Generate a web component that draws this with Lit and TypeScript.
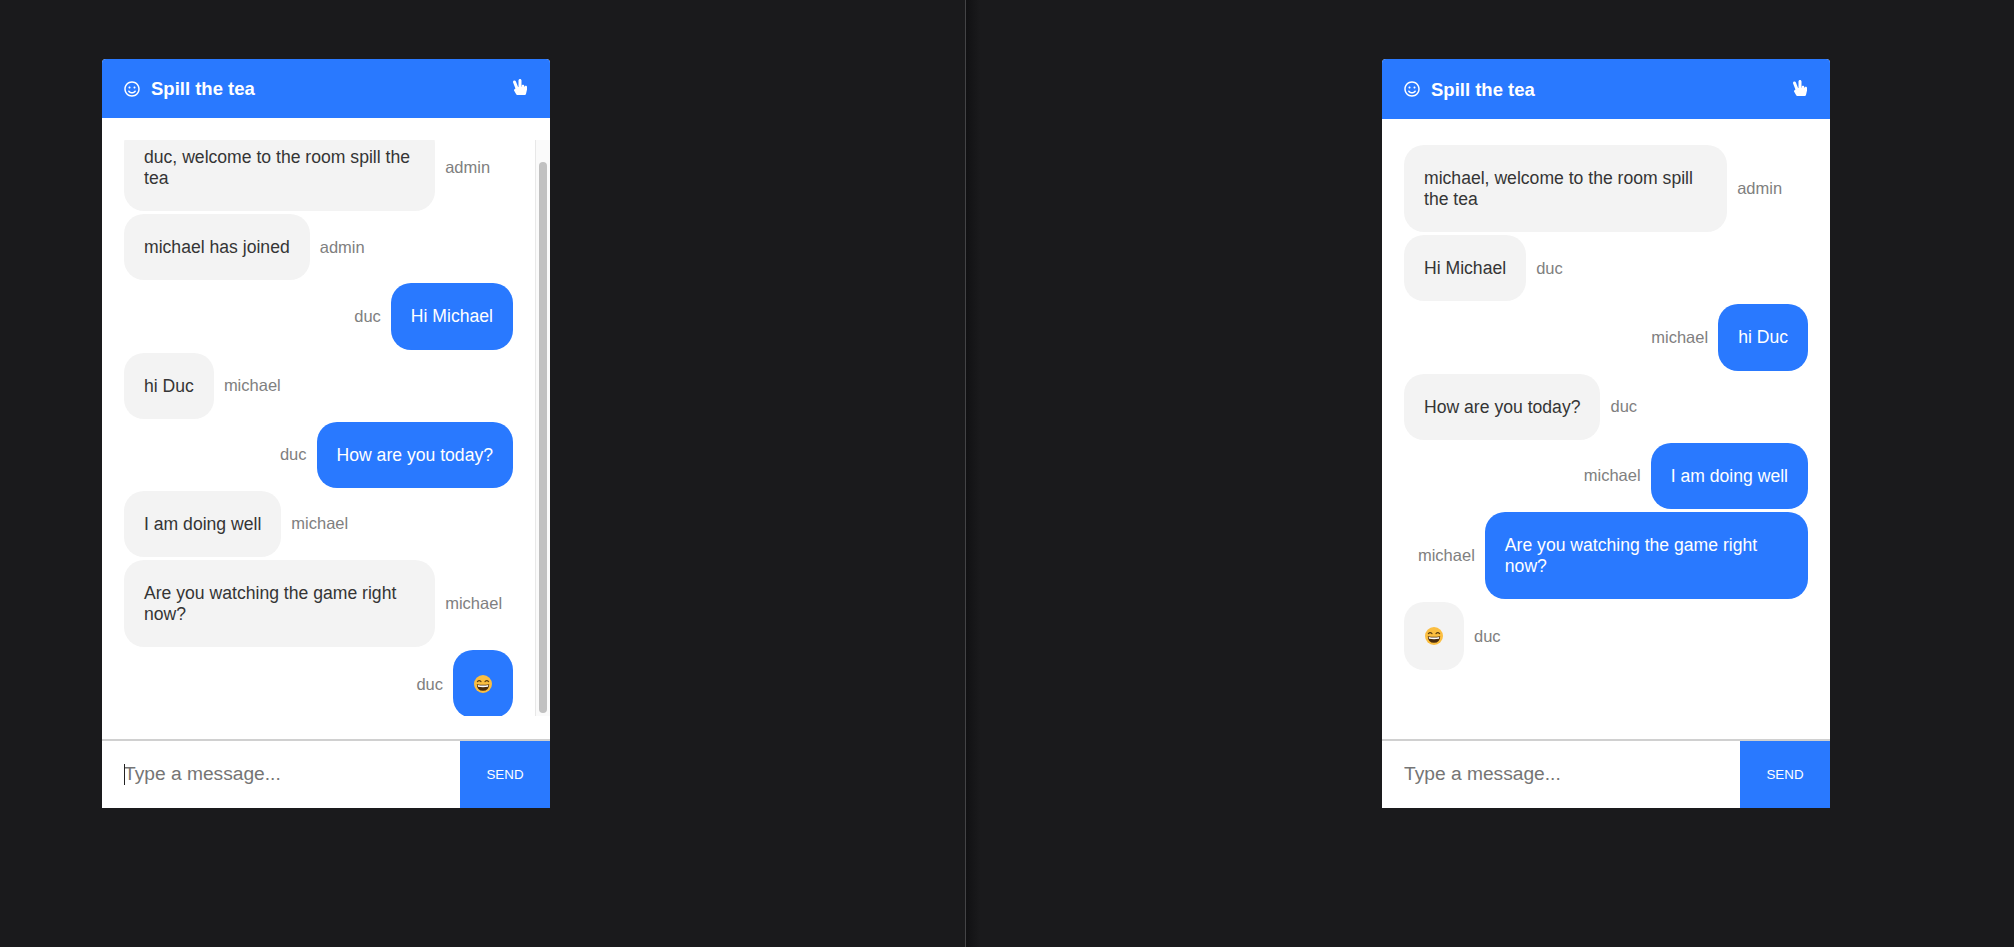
import { LitElement, html, css, svg, nothing, type TemplateResult } from "lit";
import { customElement, property, query } from "lit/decorators.js";

/** One line in the room. `mine` puts the bubble on the right in blue. */
interface Message {
  sender: string;
  text: string;
  mine?: boolean;
  emoji?: boolean;
}

const LEFT_MESSAGES: Message[] = [
  { sender: "admin", text: "duc, welcome to the room spill the tea" },
  { sender: "admin", text: "michael has joined" },
  { sender: "duc", text: "Hi Michael", mine: true },
  { sender: "michael", text: "hi Duc" },
  { sender: "duc", text: "How are you today?", mine: true },
  { sender: "michael", text: "I am doing well" },
  { sender: "michael", text: "Are you watching the game right now?" },
  { sender: "duc", text: "", mine: true, emoji: true },
];

const RIGHT_MESSAGES: Message[] = [
  { sender: "admin", text: "michael, welcome to the room spill the tea" },
  { sender: "duc", text: "Hi Michael" },
  { sender: "michael", text: "hi Duc", mine: true },
  { sender: "duc", text: "How are you today?" },
  { sender: "michael", text: "I am doing well", mine: true },
  { sender: "michael", text: "Are you watching the game right now?", mine: true },
  { sender: "duc", text: "", emoji: true },
];

const smileIcon = svg`<svg class="smile" viewBox="0 0 496 512" fill="currentColor" aria-hidden="true">
  <path d="M248 8C111 8 0 119 0 256s111 248 248 248 248-111 248-248S385 8 248 8zm0 448c-110.300 0-200-89.700-200-200S137.700 56 248 56s200 89.700 200 200-89.700 200-200 200zm-80-216c17.700 0 32-14.300 32-32s-14.300-32-32-32-32 14.300-32 32 14.300 32 32 32zm160 0c17.700 0 32-14.300 32-32s-14.300-32-32-32-32 14.300-32 32 14.300 32 32 32zm4 72.600c-20.800 25-51.500 39.400-84 39.400s-63.200-14.300-84-39.400c-8.500-10.200-23.700-11.500-33.800-3.100-10.200 8.500-11.500 23.600-3.100 33.800 30 36 74.100 56.600 120.900 56.600s90.900-20.600 120.900-56.600c8.500-10.200 7.100-25.300-3.100-33.800-10.100-8.400-25.300-7.100-33.800 3.100z"/>
</svg>`;

const peaceIcon = svg`<svg class="peace" viewBox="0 0 448 512" fill="currentColor" aria-hidden="true">
  <path d="M408 216c-22.092 0-40 17.909-40 40h-8v-32c0-22.091-17.908-40-40-40s-40 17.909-40 40v32h-8V48c0-26.510-21.490-48-48-48s-48 21.490-48 48v208h-13.572L92.688 78.449C82.994 53.774 55.134 41.630 30.461 51.324 5.787 61.017-6.356 88.877 3.337 113.551l74.765 190.342-31.090 24.872c-15.381 12.306-19.515 33.978-9.741 51.081l64 112A39.998 39.998 0 0 0 136 512h240c18.562 0 34.686-12.770 38.937-30.838l32-136A39.970 39.970 0 0 0 448 336v-80c0-22.091-17.908-40-40-40z"/>
</svg>`;

// The bubble's emoji: no colour emoji font in the sandbox, so it is drawn.
const grinEmoji = svg`<svg class="emoji" viewBox="0 0 18 18" role="img" aria-label="grinning face">
  <circle cx="9" cy="9" r="9" fill="#fbbe40"/>
  <path d="M3.400 6.600q1.800-1.900 3.600 0M11 6.600q1.800-1.900 3.600 0" fill="none" stroke="#5d3f0e" stroke-width="1.200" stroke-linecap="round"/>
  <path d="M2.800 9.200q6.200 1.300 12.400 0Q15 15.800 9 15.800T2.800 9.200z" fill="#4a2c0c"/>
  <path d="M3.700 10q5.300 1 10.600 0l-.3 1.800q-5 .8-10 0z" fill="#fff"/>
</svg>`;

@customElement("chat-card")
export class ChatCard extends LitElement {
  @property({ attribute: false }) messages: Message[] = [];
  @property({ type: Boolean }) focused = false;
  @property({ type: Boolean, reflect: true }) tall = false;
  @property({ type: Number }) scroll = 0;

  @query(".messages") private _list?: HTMLElement;

  static styles = css`
    :host {
      display: flex;
      flex-direction: column;
      width: 448px;
      height: 749px;
      background: #fff;
      border-radius: 4px 4px 0 0;
      overflow: hidden;
      font-family: "Liberation Sans", Arial, sans-serif;
    }
    .header {
      flex: none;
      height: 59px;
      box-sizing: border-box;
      padding: 0 23px 0 22px;
      display: flex;
      align-items: center;
      background: #2979ff;
      color: #fff;
    }
    :host([tall]) .header {
      height: 60px;
    }
    :host([tall]) .title {
      padding-top: 1px;
    }
    .smile {
      width: 16px;
      height: 16px;
      margin-right: 11px;
    }
    .title {
      flex: 1;
      font-size: 18.5px;
      font-weight: 700;
    }
    .peace {
      width: 14px;
      height: 16px;
      margin-bottom: 3px;
    }
    .body {
      flex: 1;
      min-height: 0;
      display: flex;
      padding: 22px 0 23px;
    }
    :host([tall]) .body {
      padding-top: 21px;
    }
    .messages {
      flex: 1;
      min-width: 0;
      box-sizing: border-box;
      padding: 5px 22px 0;
      overflow-y: hidden;
    }
    /* Headless Chromium hides native scrollbars, so the rail is real markup. */
    .rail {
      flex: none;
      width: 15px;
      box-sizing: border-box;
      padding: 22px 3px 3px 3px;
      background: #fafafa;
      border-left: 1px solid #e8e8e8;
      display: flex;
    }
    .thumb {
      flex: 1;
      background: #c1c1c1;
      border-radius: 4px;
    }
    .row {
      display: flex;
      align-items: center;
      gap: 10px;
      margin-bottom: 3px;
    }
    .row.mine {
      justify-content: flex-end;
    }
    .sender {
      font-size: 16.5px;
      color: #808080;
    }
    .bubble {
      max-width: 80%;
      box-sizing: border-box;
      padding: 23px 20px 22px;
      border-radius: 20px;
      background: #f3f3f3;
      color: #353535;
      font-size: 17.6px;
      line-height: 21.12px;
    }
    .mine .bubble {
      background: #2979ff;
      color: #fff;
    }
    .emoji {
      display: block;
      width: 18px;
      height: 18px;
      margin: 2px 1px 3px;
    }
    .composer {
      flex: none;
      height: 67px;
      display: flex;
      border-top: 2px solid #d0d0d0;
    }
    .field {
      position: relative;
      flex: 1;
      min-width: 0;
    }
    .field input {
      width: 100%;
      height: 100%;
      box-sizing: border-box;
      padding: 0 0 2px 22px;
      border: 0;
      outline: 0;
      background: transparent;
      font: 19.2px "Liberation Sans", Arial, sans-serif;
      color: #353535;
    }
    .field input::placeholder {
      color: #757575;
      opacity: 1;
    }
    .caret {
      position: absolute;
      left: 22px;
      top: 23px;
      width: 1px;
      height: 21px;
      background: #222;
    }
    .send {
      flex: none;
      width: 90px;
      border: 0;
      padding: 0;
      background: #2979ff;
      color: #fff;
      font: 13.33px "Liberation Sans", Arial, sans-serif;
    }
  `;

  protected firstUpdated(): void {
    if (this._list && this.scroll) this._list.scrollTop = this.scroll;
  }

  private _renderRow(m: Message): TemplateResult {
    const bubble = html`<div class="bubble">${m.emoji ? grinEmoji : m.text}</div>`;
    const name = html`<span class="sender">${m.sender}</span>`;
    return html`<div class="row ${m.mine ? "mine" : ""}">
      ${m.mine ? html`${name}${bubble}` : html`${bubble}${name}`}
    </div>`;
  }

  protected render(): TemplateResult {
    return html`
      <div class="header">
        ${smileIcon}
        <span class="title">Spill the tea</span>
        ${peaceIcon}
      </div>
      <div class="body">
        <div class="messages">${this.messages.map((m) => this._renderRow(m))}</div>
        ${this.scroll ? html`<div class="rail"><div class="thumb"></div></div>` : nothing}
      </div>
      <div class="composer">
        <div class="field">
          <input type="text" placeholder="Type a message..." />
          ${this.focused ? html`<span class="caret"></span>` : nothing}
        </div>
        <button class="send">SEND</button>
      </div>
    `;
  }
}

@customElement("app-root")
export class AppRoot extends LitElement {
  static styles = css`
    :host {
      display: flex;
      height: 947px;
      background: #1a1a1c;
      overflow: hidden;
    }
    .pane {
      box-sizing: border-box;
      padding-top: 59px;
    }
    .pane.left {
      flex: none;
      width: 965px;
      padding-left: 102px;
    }
    .pane.right {
      flex: 1;
      padding-left: 416px;
      border-left: 1px solid #444446;
      background: linear-gradient(to right, #111113, #1a1a1c 14px);
    }
  `;

  protected render(): TemplateResult {
    return html`
      <div class="pane left">
        <chat-card .messages=${LEFT_MESSAGES} .scroll=${21} focused></chat-card>
      </div>
      <div class="pane right">
        <chat-card .messages=${RIGHT_MESSAGES} tall></chat-card>
      </div>
    `;
  }
}
